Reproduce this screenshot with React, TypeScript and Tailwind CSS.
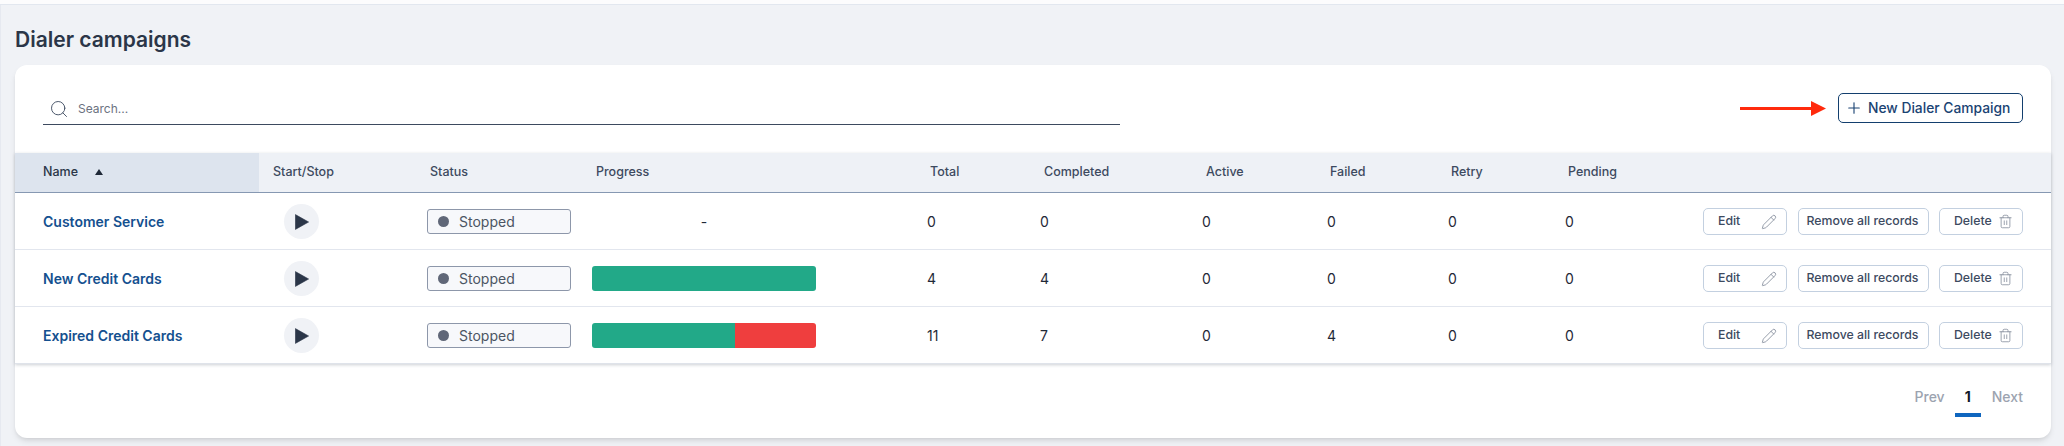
import { Pencil, Plus, Search, Trash2 } from "lucide-react";

type Row = {
  name: string;
  done: number;
  failed: number;
  total: number;
  active: number;
  retry: number;
  pending: number;
};

const rows: Row[] = [
  { name: "Customer Service", total: 0, done: 0, active: 0, failed: 0, retry: 0, pending: 0 },
  { name: "New Credit Cards", total: 4, done: 4, active: 0, failed: 0, retry: 0, pending: 0 },
  { name: "Expired Credit Cards", total: 11, done: 7, active: 0, failed: 4, retry: 0, pending: 0 },
];

const th = "p-0 pl-[13px] text-left text-[12.5px] font-medium text-[#3d4a5f]";
const td = "p-0 pl-[10px] pt-[2px] text-[14px] text-[#1f2937]";
const actionBtn =
  "flex h-[27px] items-center rounded-[5px] border border-[#c3d0e0] bg-white text-[12.3px] font-medium text-[#3d4a5f]";

function Progress({ row }: { row: Row }) {
  if (row.total === 0) {
    return <div className="w-[224px] text-center text-[14px] text-[#1f2937]">-</div>;
  }
  return (
    <div className="flex h-[25px] w-[224px] overflow-hidden rounded-[3px]">
      <div className="bg-[#22a988]" style={{ width: `${(row.done / row.total) * 100}%` }} />
      <div className="bg-[#ef3e3e]" style={{ width: `${(row.failed / row.total) * 100}%` }} />
    </div>
  );
}

export default function App() {
  return (
    <div className="h-[446px] w-[2064px] overflow-hidden bg-[#f0f2f6] font-['Inter',sans-serif]">
      <div className="h-[5px] border-b border-[#e2e7ef] bg-[#fcfcfd]" />
      <div className="h-[441px] border-l border-[#e6e9f0] pl-[14px] pr-[13px]">
        <h1 className="flex h-[60px] items-center pt-[10px] text-[21px] font-semibold text-[#2b3648]">
          Dialer campaigns
        </h1>
        <div className="h-[373px] rounded-[12px] bg-white shadow-md">
          <div className="flex h-[88px] items-start justify-between pl-[28px] pr-[28px] pt-[28px]">
            <div className="mt-[1px] flex h-[31px] w-[1077px] items-center border-b border-[#3d4a5f] pb-[1px] pl-[6px]">
              <Search size={20} strokeWidth={1.1} className="text-[#3d4a5f]" />
              <span className="ml-[9px] text-[12px] text-[#6b7280]">Search...</span>
            </div>
            <div className="flex items-center gap-[12px]">
              <svg width="86" height="15" viewBox="0 0 86 15">
                <rect x="0" y="6" width="72" height="3" fill="#ff2a0d" />
                <polygon points="71,0 86,7.5 71,15" fill="#ff2a0d" />
              </svg>
              <button className="flex h-[30px] w-[185px] items-center gap-[5px] rounded-[5px] border border-[#133f6e] bg-white pl-[6px] text-[13.8px] font-medium text-[#1a4373]">
                <Plus size={18} strokeWidth={1.5} />
                New Dialer Campaign
              </button>
            </div>
          </div>

          <table className="w-full table-fixed border-collapse shadow-[0_1px_3px_rgba(60,70,90,0.25)]">
            <colgroup>
              <col className="w-[244px]" />
              <col className="w-[158px]" />
              <col className="w-[165px]" />
              <col className="w-[335px]" />
              <col className="w-[113px]" />
              <col className="w-[162px]" />
              <col className="w-[125px]" />
              <col className="w-[121px]" />
              <col className="w-[117px]" />
              <col className="w-[138px]" />
              <col />
            </colgroup>
            <thead>
              <tr className="h-[39px] border-b border-[#8698b2] bg-[#eef1f6]">
                <th className="bg-[#dde4ee] p-0 pl-[28px] text-left text-[12.5px] font-medium text-[#2b3648]">
                  <span className="flex items-center gap-[17px]">
                    Name
                    <svg width="8" height="6" viewBox="0 0 8 6">
                      <polygon points="4,0 8,6 0,6" fill="#1f2937" />
                    </svg>
                  </span>
                </th>
                <th className={th + " pl-[14px]"}>Start/Stop</th>
                <th className={th}>Status</th>
                <th className={th + " pl-[14px]"}>Progress</th>
                <th className={th}>Total</th>
                <th className={th + " pl-[14px]"}>Completed</th>
                <th className={th + " pl-[14px]"}>Active</th>
                <th className={th}>Failed</th>
                <th className={th}>Retry</th>
                <th className={th}>Pending</th>
                <th className="p-0" />
              </tr>
            </thead>
            <tbody>
              {rows.map((r) => (
                <tr key={r.name} className="h-[57px] border-b border-[#e2e6ee] last:border-b-[#dfe3ea]">
                  <td className="p-0 pl-[28px] pt-[2px] text-[14px] font-semibold text-[#14508f]">{r.name}</td>
                  <td className="p-0 pl-[25px] pt-[2px]">
                    <button className="flex h-[35px] w-[35px] items-center justify-center rounded-full bg-[#f0f2f6]">
                      <svg width="14" height="16" viewBox="0 0 14 16" className="ml-[1px]">
                        <path d="M0.4 0.6 L13.6 8 L0.4 15.4 Z" fill="#2b3648" stroke="#2b3648" strokeWidth="0.6" strokeLinejoin="round" />
                      </svg>
                    </button>
                  </td>
                  <td className={td}>
                    <div className="flex h-[25px] w-[144px] items-center rounded-[3px] border border-[#8d97aa] bg-[#f7f8fb] pl-[10px]">
                      <span className="h-[11px] w-[11px] rounded-full bg-[#606778]" />
                      <span className="ml-[10px] text-[14px] text-[#4b5563]">Stopped</span>
                    </div>
                  </td>
                  <td className={td}>
                    <Progress row={r} />
                  </td>
                  <td className={td}>{r.total}</td>
                  <td className={td}>{r.done}</td>
                  <td className={td}>{r.active}</td>
                  <td className={td}>{r.failed}</td>
                  <td className={td}>{r.retry}</td>
                  <td className={td}>{r.pending}</td>
                  <td className="p-0 pr-[28px] pt-[2px]">
                    <div className="flex justify-end">
                      <button className={actionBtn + " w-[84px] justify-between pl-[14px] pr-[9px]"}>
                        Edit
                        <Pencil size={16} strokeWidth={1.2} className="text-[#7b8494]" />
                      </button>
                      <button className={actionBtn + " ml-[11px] w-[131px] justify-center pr-[2px]"}>Remove all records</button>
                      <button className={actionBtn + " ml-[10px] w-[84px] justify-between pl-[14px] pr-[9px]"}>
                        Delete
                        <Trash2 size={15} strokeWidth={1.2} className="text-[#7b8494]" />
                      </button>
                    </div>
                  </td>
                </tr>
              ))}
            </tbody>
          </table>

          <div className="flex justify-end pr-[28px] pt-[22px] text-[14px]">
            <span className="font-medium text-[#9ca3af]">Prev</span>
            <span className="ml-[10px] flex h-[31px] w-[26px] justify-center border-b-4 border-[#0f66bf] font-bold text-[#111827]">
              1
            </span>
            <span className="ml-[11px] font-medium text-[#9ca3af]">Next</span>
          </div>
        </div>
      </div>
    </div>
  );
}
